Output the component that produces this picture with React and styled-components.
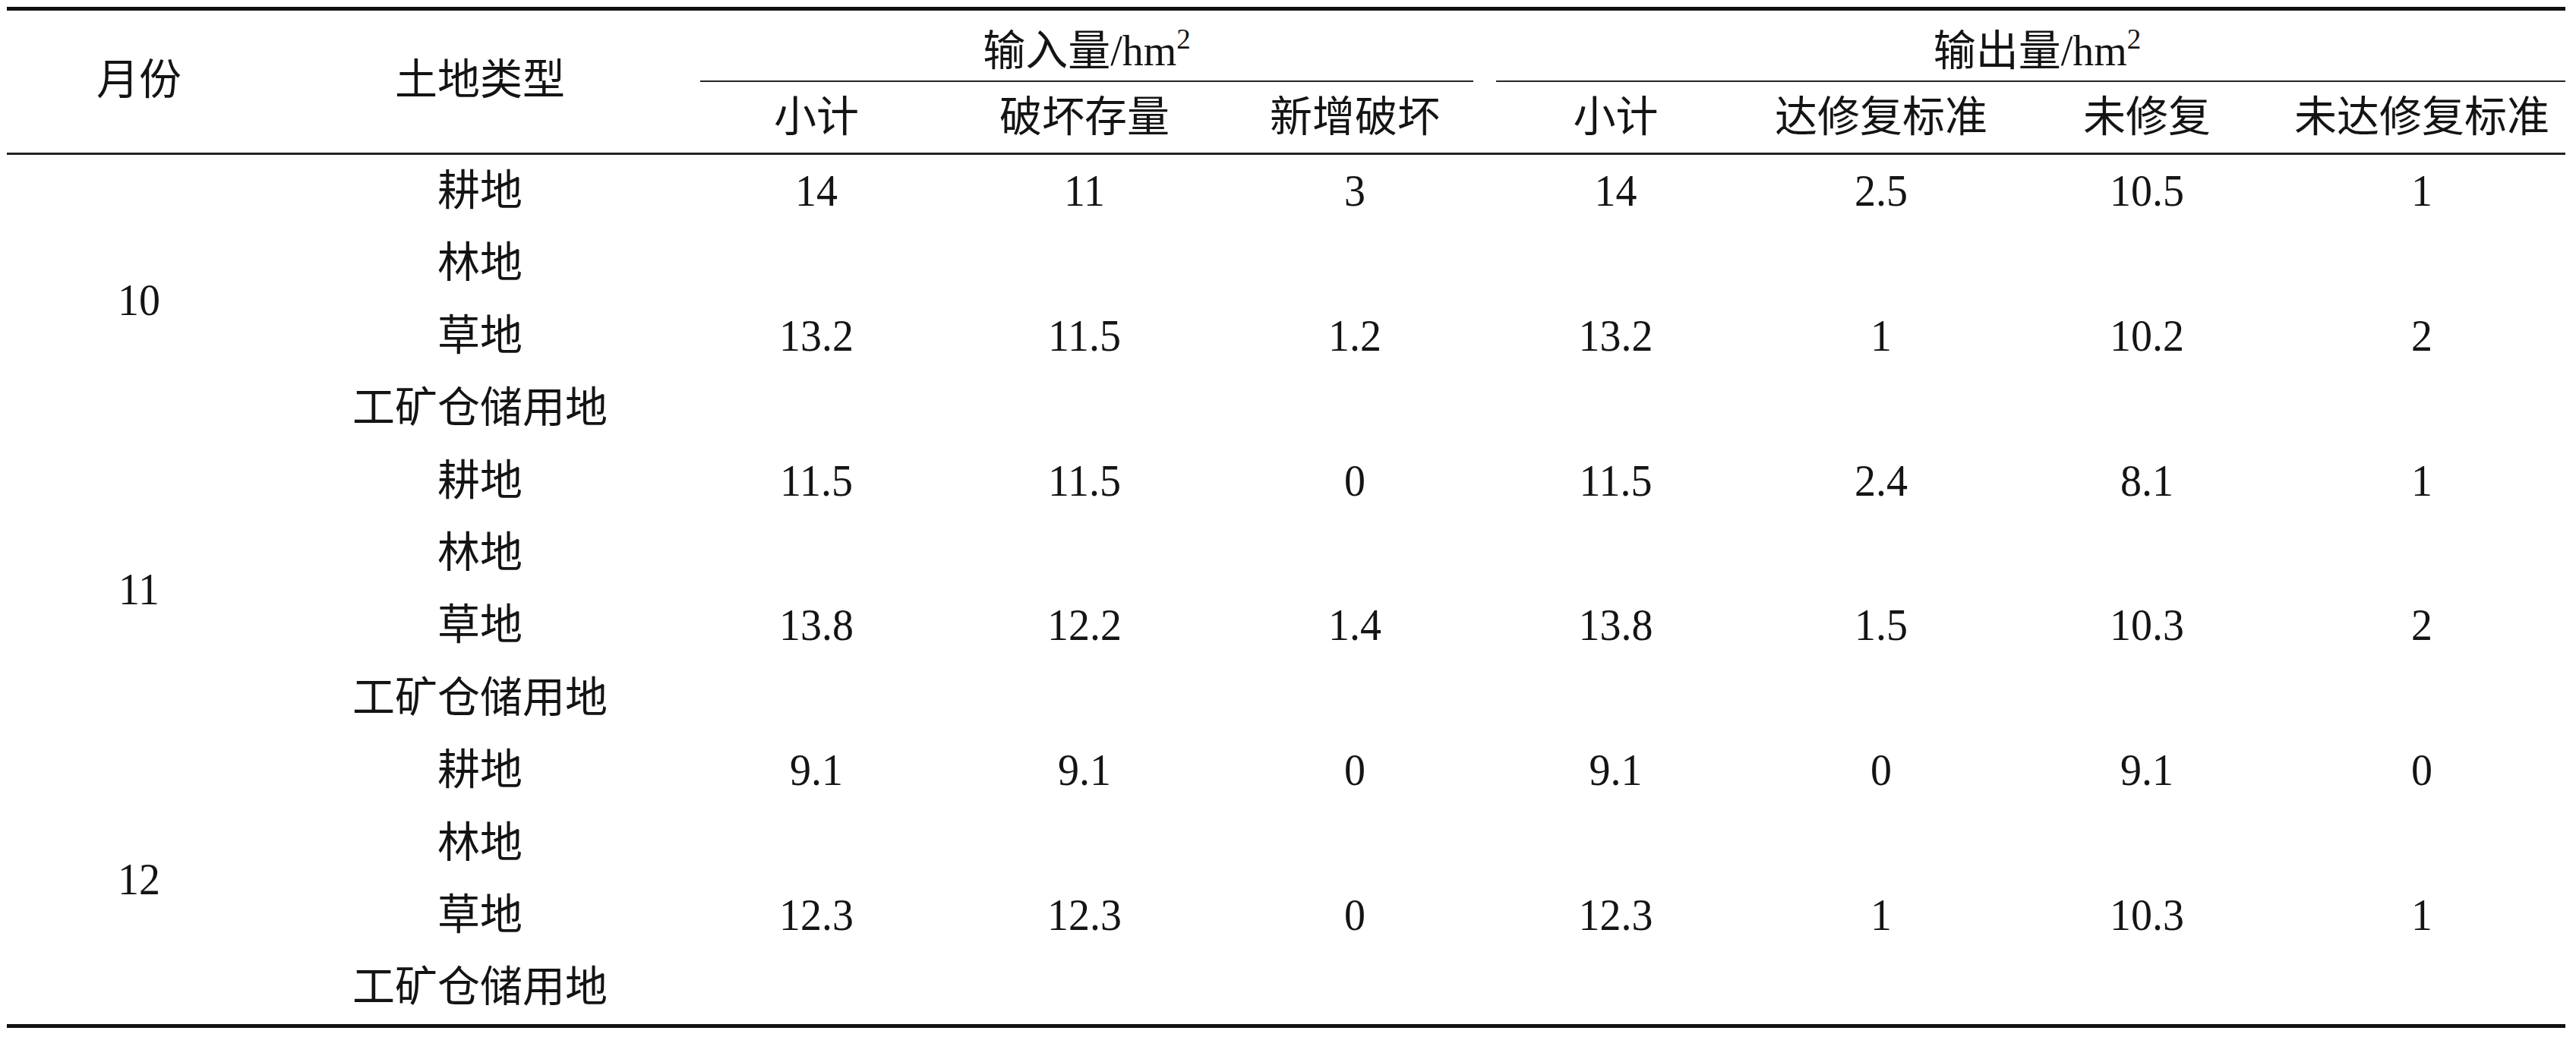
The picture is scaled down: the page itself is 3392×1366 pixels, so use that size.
import React from 'react';
import styled, { createGlobalStyle } from 'styled-components';

const GlobalStyle = createGlobalStyle`
  html, body {
    margin: 0;
    padding: 0;
    background: #fff;
  }
  body {
    font-family: "Liberation Serif", "Noto Sans CJK SC", serif;
    color: #141414;
  }
`;

const widths = [348, 550, 336, 370, 342, 345, 354, 346, 378];

const months = [
  {
    month: '10',
    rows: [
      { land: '耕地', values: ['14', '11', '3', '14', '2.5', '10.5', '1'] },
      { land: '林地' },
      { land: '草地', values: ['13.2', '11.5', '1.2', '13.2', '1', '10.2', '2'] },
      { land: '工矿仓储用地' },
    ],
  },
  {
    month: '11',
    rows: [
      { land: '耕地', values: ['11.5', '11.5', '0', '11.5', '2.4', '8.1', '1'] },
      { land: '林地' },
      { land: '草地', values: ['13.8', '12.2', '1.4', '13.8', '1.5', '10.3', '2'] },
      { land: '工矿仓储用地' },
    ],
  },
  {
    month: '12',
    rows: [
      { land: '耕地', values: ['9.1', '9.1', '0', '9.1', '0', '9.1', '0'] },
      { land: '林地' },
      { land: '草地', values: ['12.3', '12.3', '0', '12.3', '1', '10.3', '1'] },
      { land: '工矿仓储用地' },
    ],
  },
];

const inputCols = ['小计', '破坏存量', '新增破坏'];
const outputCols = ['小计', '达修复标准', '未修复', '未达修复标准'];

export default function App() {
  return (
    <>
      <GlobalStyle />
      <Page>
        <Table>
          <colgroup>
            {widths.map((w, i) => (
              <col key={i} style={{ width: w }} />
            ))}
          </colgroup>
          <thead>
            <tr>
              <CornerHead rowSpan={2}>月份</CornerHead>
              <CornerHead rowSpan={2}>土地类型</CornerHead>
              <GroupHead colSpan={3}>
                <GroupTitle>
                  输入量/hm<Sup>2</Sup>
                </GroupTitle>
                <MidRule $left={15} $right={15} />
              </GroupHead>
              <GroupHead colSpan={4}>
                <GroupTitle $shift={16}>
                  输出量/hm<Sup>2</Sup>
                </GroupTitle>
                <MidRule $left={15} $right={0} />
              </GroupHead>
            </tr>
            <tr>
              {[...inputCols, ...outputCols].map((label, i) => (
                <SubHead key={i}>{label}</SubHead>
              ))}
            </tr>
          </thead>
          <tbody>
            {months.map((m, mi) =>
              m.rows.map((row, ri) => {
                const last = mi === months.length - 1 && ri === m.rows.length - 1;
                return (
                  <tr key={`${m.month}-${ri}`}>
                    {ri === 0 && (
                      <MonthCell rowSpan={m.rows.length} $last={mi === months.length - 1}>
                        <Num>{m.month}</Num>
                      </MonthCell>
                    )}
                    <Cell $last={last}>{row.land}</Cell>
                    {Array.from({ length: 7 }).map((_, ci) => (
                      <Cell key={ci} $last={last}>
                        {row.values ? <Num>{row.values[ci]}</Num> : ''}
                      </Cell>
                    ))}
                  </tr>
                );
              })
            )}
          </tbody>
        </Table>
      </Page>
    </>
  );
}

const Page = styled.div`
  padding: 9px 0 0 9px;
  width: 3383px;
  min-height: 1366px;
  box-sizing: border-box;
`;

const Table = styled.table`
  table-layout: fixed;
  width: 3369px;
  border-collapse: separate;
  border-spacing: 0;
  font-size: 56px;
  font-family: "Liberation Serif", "Noto Sans CJK SC", serif;
  color: #141414;
`;

const CornerHead = styled.th`
  font-weight: 400;
  text-align: center;
  vertical-align: middle;
  padding: 0 0 6px 0;
  border-top: 5px solid #111;
  border-bottom: 3px solid #222;
  line-height: 1;
`;

const GroupHead = styled.th`
  font-weight: 400;
  padding: 0;
  border-top: 5px solid #111;
  vertical-align: bottom;
`;

const GroupTitle = styled.div`
  height: 60px;
  line-height: 60px;
  padding: 23px 0 9px 0;
  text-align: center;
  white-space: nowrap;
  transform: translateX(${(p) => p.$shift || 0}px);
`;

const Sup = styled.sup`
  font-size: 0.66em;
  line-height: 0;
  vertical-align: 0.6em;
`;

const MidRule = styled.div`
  height: 2px;
  background: #262626;
  margin: 0 ${(p) => p.$right}px 0 ${(p) => p.$left}px;
`;

const SubHead = styled.th`
  font-weight: 400;
  text-align: center;
  padding: 0;
  line-height: 93px;
  border-bottom: 3px solid #222;
  white-space: nowrap;
`;

const Num = styled.span`
  display: inline-block;
  transform: scaleY(1.06);
`;

const Cell = styled.td`
  text-align: center;
  padding: 0;
  line-height: 95.4px;
  white-space: nowrap;
  border-bottom: ${(p) => (p.$last ? '5px solid #111' : 'none')};
`;

const MonthCell = styled.td`
  text-align: center;
  vertical-align: middle;
  padding: 0;
  line-height: 1;
  border-bottom: ${(p) => (p.$last ? '5px solid #111' : 'none')};
`;
